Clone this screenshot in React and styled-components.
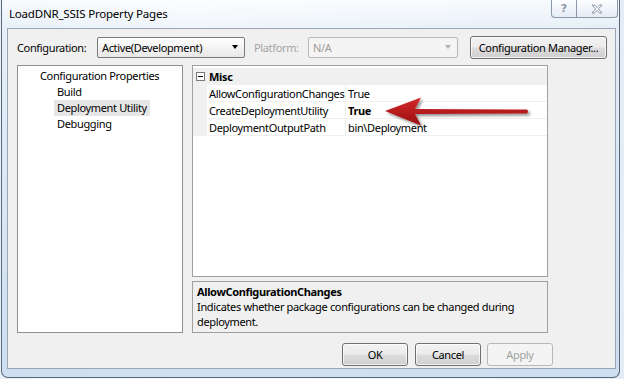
import React from "react";
import styled, { createGlobalStyle } from "styled-components";

const GlobalStyle = createGlobalStyle`
  html, body { margin: 0; padding: 0; }
  body {
    width: 624px; height: 379px; overflow: hidden;
    font-family: "Noto Sans", "Open Sans", sans-serif;
    font-size: 11px; letter-spacing: -0.35px; color: #000;
    background: #eef3f9;
  }
`;

const Page = styled.div`
  width: 624px;
  height: 379px;
  background: linear-gradient(90deg, #e9f0f7 0%, #f6f9fc 40%, #e4edf6 100%);
  overflow: hidden;
`;

const Window = styled.div`
  margin-left: 1px;
  width: 617px;
  height: 377px;
  border: 1px solid #59687a;
  border-top: none;
  border-radius: 0 0 7px 7px;
  display: flex;
  flex-direction: column;
  background:
    linear-gradient(180deg, rgba(255,255,255,0.85) 0%, rgba(240,245,251,0.7) 8%, rgba(205,222,240,0.9) 100%),
    linear-gradient(90deg, #cfe0f1 0%, #eef4fa 30%, #d7e6f4 70%, #c7dbef 100%);
`;

const TitleBar = styled.div`
  height: 28px;
  display: flex;
  align-items: flex-start;
  padding-left: 7px;
`;

const Title = styled.span`
  margin-top: 6px;
  font-size: 11.5px;
  letter-spacing: -0.2px;
  color: #000;
`;

const CaptionButtons = styled.div`
  margin-left: auto;
  margin-right: 1px;
  display: flex;
`;

const CaptionButton = styled.div`
  width: ${(p) => p.$w}px;
  height: 18px;
  box-sizing: border-box;
  border: 1px solid #8a98a8;
  border-top: none;
  border-left: ${(p) => (p.$first ? "1px solid #8a98a8" : "none")};
  border-radius: ${(p) => (p.$first ? "0 0 0 4px" : "0 0 4px 0")};
  background: linear-gradient(180deg, rgba(255,255,255,0.7), rgba(226,235,245,0.8));
  display: flex;
  align-items: center;
  justify-content: center;
  color: #8b96a3;
  font-family: "DejaVu Sans", sans-serif;
  font-size: 11px;
  font-weight: bold;
  letter-spacing: 0;
`;

const Client = styled.div`
  margin: 0 3px 0 5px;
  height: 341px;
  box-sizing: border-box;
  border: 1px solid #9aa6b3;
  background: #f0f0f0;
  padding: 7px 7px 0 9px;
  display: flex;
  flex-direction: column;
`;

const TopRow = styled.div`
  display: flex;
  align-items: center;
  height: 22px;
`;

const Label = styled.span`
  width: ${(p) => p.$w}px;
  margin-left: ${(p) => p.$ml || 0}px;
  color: ${(p) => (p.$disabled ? "#a3a3a3" : "#000")};
  white-space: nowrap;
`;

const Combo = styled.div`
  width: ${(p) => p.$w}px;
  height: 21px;
  box-sizing: border-box;
  border: 1px solid ${(p) => (p.$disabled ? "#b7babc" : "#7a7a7a")};
  border-radius: 2px;
  background: ${(p) =>
    p.$disabled ? "#f4f4f4" : "linear-gradient(180deg, #ffffff 0%, #f3f3f3 50%, #e8e8e8 100%)"};
  color: ${(p) => (p.$disabled ? "#9c9c9c" : "#000")};
  display: flex;
  align-items: center;
  padding: 0 6px 0 4px;
`;

const ComboText = styled.span`
  flex: 1;
  white-space: nowrap;
`;

const Caret = styled.span`
  width: 0;
  height: 0;
  border-left: 3.5px solid transparent;
  border-right: 3.5px solid transparent;
  border-top: 4px solid ${(p) => (p.$disabled ? "#b0b0b0" : "#000")};
`;

const Button = styled.div`
  width: ${(p) => p.$w}px;
  height: ${(p) => p.$h || 23}px;
  box-sizing: border-box;
  border: 1px solid ${(p) => (p.$disabled ? "#b5b9bc" : "#707070")};
  border-radius: 3px;
  background: ${(p) =>
    p.$disabled
      ? "#f4f4f4"
      : "linear-gradient(180deg, #f2f2f2 0%, #ebebeb 48%, #dddddd 52%, #cfcfcf 100%)"};
  box-shadow: ${(p) => (p.$disabled ? "none" : "inset 0 0 0 1px rgba(255,255,255,0.7)")};
  color: ${(p) => (p.$disabled ? "#a0a0a0" : "#000")};
  display: flex;
  align-items: center;
  justify-content: center;
  white-space: nowrap;
  margin-left: ${(p) => p.$ml || 0}px;
`;

const MainRow = styled.div`
  margin-top: 7px;
  height: 268px;
  display: flex;
  gap: 9px;
`;

const Tree = styled.div`
  width: 166px;
  box-sizing: border-box;
  border: 1px solid #8c9097;
  background: #fff;
  padding-top: 2px;
`;

const TreeItem = styled.div`
  height: 16px;
  display: flex;
  align-items: center;
  padding-left: ${(p) => p.$indent}px;
`;

const TreeText = styled.span`
  padding: 0 3px;
  line-height: 16px;
  background: ${(p) => (p.$selected ? "#e6e6e6" : "transparent")};
`;

const RightCol = styled.div`
  width: 356px;
  display: flex;
  flex-direction: column;
  gap: 4px;
`;

const Grid = styled.div`
  position: relative;
  height: 212px;
  box-sizing: border-box;
  border: 1px solid #a0a0a0;
  background: #fff;
  padding-top: 2px;
`;

const GridRow = styled.div`
  display: flex;
  height: 17px;
  box-sizing: border-box;
  border-bottom: 1px solid #f0f0f0;
  background: ${(p) => (p.$category ? "#f0f0f0" : "#fff")};
`;

const Margin = styled.div`
  width: 14px;
  background: #f0f0f0;
  display: flex;
  align-items: center;
  justify-content: center;
`;

const Expander = styled.div`
  width: 7px;
  height: 7px;
  border: 1px solid #7a7a7a;
  background: #fff;
  position: relative;
  &::after {
    content: "";
    position: absolute;
    left: 1px;
    top: 3px;
    width: 5px;
    height: 1px;
    background: #000;
  }
`;

const NameCell = styled.div`
  width: 139px;
  padding-left: 2px;
  box-sizing: border-box;
  display: flex;
  align-items: center;
  border-right: ${(p) => (p.$category ? "none" : "1px solid #f0f0f0")};
  font-weight: ${(p) => (p.$bold ? "bold" : "normal")};
  white-space: nowrap;
`;

const ValueCell = styled.div`
  flex: 1;
  padding-left: 2px;
  display: flex;
  align-items: center;
  font-weight: ${(p) => (p.$bold ? "bold" : "normal")};
  white-space: nowrap;
`;

const Arrow = styled.svg`
  position: absolute;
  left: 188px;
  top: 28px;
`;

const Description = styled.div`
  height: 52px;
  box-sizing: border-box;
  border: 1px solid #a0a0a0;
  background: #f0f0f0;
  padding: 2px 4px;
  line-height: 15px;
`;

const DescTitle = styled.div`
  font-weight: bold;
`;

const BottomRow = styled.div`
  margin-top: 10px;
  display: flex;
  padding-left: 325px;
`;

const rows = [
  { name: "AllowConfigurationChanges", value: "True" },
  { name: "CreateDeploymentUtility", value: "True", bold: true },
  { name: "DeploymentOutputPath", value: "bin\\Deployment" },
];

export default function App() {
  return (
    <>
      <GlobalStyle />
      <Page>
        <Window>
          <TitleBar>
            <Title>LoadDNR_SSIS Property Pages</Title>
            <CaptionButtons>
              <CaptionButton $w={26} $first>?</CaptionButton>
              <CaptionButton $w={41}>
                <svg width="12" height="10" viewBox="0 0 12 10">
                  <path
                    d="M1 1 H3.5 L6 3.5 L8.5 1 H11 L7.3 5 L11 9 H8.5 L6 6.5 L3.5 9 H1 L4.7 5 Z"
                    fill="#fff"
                    stroke="#8b96a3"
                    strokeWidth="1"
                  />
                </svg>
              </CaptionButton>
            </CaptionButtons>
          </TitleBar>
          <Client>
            <TopRow>
              <Label $w={80}>Configuration:</Label>
              <Combo $w={148}>
                <ComboText>Active(Development)</ComboText>
                <Caret />
              </Combo>
              <Label $w={54} $ml={9} $disabled>Platform:</Label>
              <Combo $w={150} $disabled>
                <ComboText>N/A</ComboText>
                <Caret $disabled />
              </Combo>
              <Button $w={137} $ml={12}>Configuration Manager...</Button>
            </TopRow>
            <MainRow>
              <Tree>
                <TreeItem $indent={19}><TreeText>Configuration Properties</TreeText></TreeItem>
                <TreeItem $indent={36}><TreeText>Build</TreeText></TreeItem>
                <TreeItem $indent={36}><TreeText $selected>Deployment Utility</TreeText></TreeItem>
                <TreeItem $indent={36}><TreeText>Debugging</TreeText></TreeItem>
              </Tree>
              <RightCol>
                <Grid>
                  <GridRow $category>
                    <Margin><Expander /></Margin>
                    <NameCell $category $bold>Misc</NameCell>
                  </GridRow>
                  {rows.map((r) => (
                    <GridRow key={r.name}>
                      <Margin />
                      <NameCell>{r.name}</NameCell>
                      <ValueCell $bold={r.bold}>{r.value}</ValueCell>
                    </GridRow>
                  ))}
                  <Arrow width="160" height="36" viewBox="0 0 160 36">
                    <defs>
                      <linearGradient id="ag" x1="0" y1="0" x2="0" y2="1">
                        <stop offset="0" stopColor="#d42a2a" />
                        <stop offset="1" stopColor="#9a0d10" />
                      </linearGradient>
                      <filter id="sh" x="-10%" y="-30%" width="130%" height="180%">
                        <feGaussianBlur in="SourceAlpha" stdDeviation="1.5" />
                        <feOffset dx="2" dy="2" />
                        <feComponentTransfer><feFuncA type="linear" slope="0.45" /></feComponentTransfer>
                        <feMerge><feMergeNode /><feMergeNode in="SourceGraphic" /></feMerge>
                      </filter>
                    </defs>
                    <path
                      d="M4 17 L40 3.5 L34 15 L146 15.5 Q148 17.5 146 19.5 L34 20 L40 31.5 Z"
                      fill="url(#ag)"
                      filter="url(#sh)"
                    />
                  </Arrow>
                </Grid>
                <Description>
                  <DescTitle>AllowConfigurationChanges</DescTitle>
                  <div>Indicates whether package configurations can be changed during deployment.</div>
                </Description>
              </RightCol>
            </MainRow>
            <BottomRow>
              <Button $w={66}>OK</Button>
              <Button $w={66} $ml={7}>Cancel</Button>
              <Button $w={66} $ml={6} $disabled>Apply</Button>
            </BottomRow>
          </Client>
        </Window>
      </Page>
    </>
  );
}
